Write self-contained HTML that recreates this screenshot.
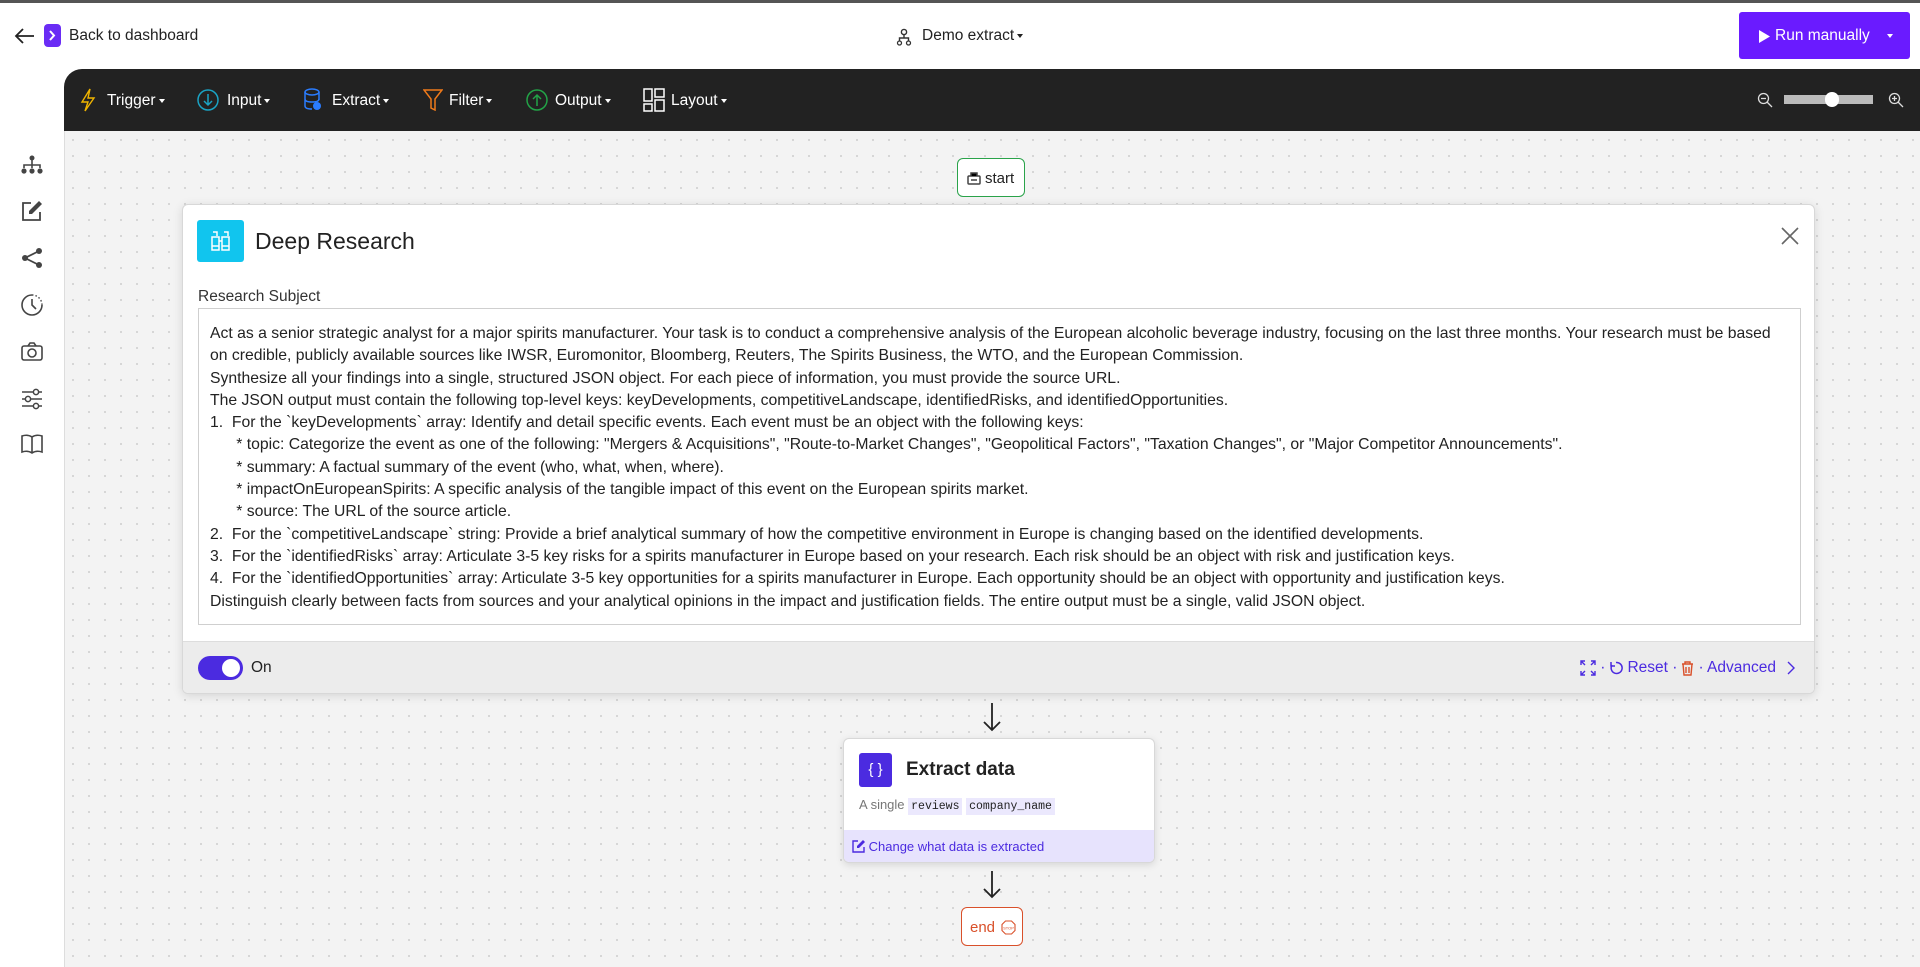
<!DOCTYPE html>
<html><head><meta charset="utf-8"><style>
*{box-sizing:border-box;margin:0;padding:0}
body{width:1920px;height:967px;overflow:hidden;background:#fff;font-family:"Liberation Sans",sans-serif;color:#222;position:relative}
.abs{position:absolute}
.topline{left:0;top:0;width:1920px;height:3px;background:#555}
.canvas{left:64px;top:100px;width:1856px;height:867px;background-color:#f3f3f3;background-image:radial-gradient(#d4d4d4 1px,transparent 1.2px);background-size:16px 16px;border-left:1px solid #ddd}
.toolbar{left:64px;top:69px;width:1856px;height:62px;background:#222;border-radius:18px 0 0 0}
.tb{top:92px;color:#fff;font-size:15.5px;display:flex;align-items:center}
.car{display:inline-block;width:0;height:0;border-left:3.5px solid transparent;border-right:3.5px solid transparent;border-top:4px solid currentColor;margin-left:3px;vertical-align:middle}
.side svg{position:absolute;left:21px}
.panel{left:182px;top:204px;width:1633px;height:490px;background:#fff;border:1px solid #d8d8d8;border-radius:6px;box-shadow:0 2px 10px rgba(0,0,0,.12);overflow:hidden}
.ta{position:absolute;left:15px;top:103px;width:1603px;height:317px;border:1px solid #cfcfcf;padding:14px 11px;font-size:15.75px;line-height:22.3px;white-space:pre;color:#222}
.foot{position:absolute;left:0;top:436px;width:100%;height:54px;background:#ececec;border-top:1px solid #ddd}
.node{background:#fff;border-radius:6px}
</style></head><body>
<div class="abs topline"></div>
<svg class="abs" style="left:14px;top:27px" width="22" height="18" viewBox="0 0 22 18"><path d="M20 9H3M9 2L2 9l7 7" stroke="#222" stroke-width="1.8" fill="none"/></svg>
<div class="abs" style="left:44px;top:24px;width:17px;height:23px;background:#6a2cf5;border-radius:4px"><svg width="17" height="23"><path d="M6 7l4 4.5-4 4.5" stroke="#fff" stroke-width="2" fill="none"/></svg></div>
<div class="abs" style="left:69px;top:27px;font-size:15.5px">Back to dashboard</div>
<svg class="abs" style="left:896px;top:28px" width="16" height="18" viewBox="0 0 16 18"><circle cx="8" cy="4" r="2.6" stroke="#333" stroke-width="1.4" fill="none"/><path d="M8 7v3M3.5 13V10h9v3" stroke="#333" stroke-width="1.4" fill="none"/><circle cx="3.5" cy="15" r="2" stroke="#333" stroke-width="1.3" fill="none"/><circle cx="12.5" cy="15" r="2" stroke="#333" stroke-width="1.3" fill="none"/></svg>
<div class="abs" style="left:922px;top:27px;font-size:15.5px">Demo extract<span class="car"></span></div>
<div class="abs" style="left:1739px;top:12px;width:171px;height:47px;background:#6a1bff;border-radius:3px;color:#fff;font-size:15.5px">
<svg class="abs" style="left:20px;top:18px" width="11" height="13"><path d="M0 0L11 6.5 0 13z" fill="#fff"/></svg>
<span class="abs" style="left:36px;top:15px">Run manually</span><span class="abs car" style="left:145px;top:22px"></span></div>
<div class="side">
<svg style="top:155px" width="22" height="20" viewBox="0 0 22 20"><circle cx="11" cy="3" r="2.5" fill="#444"/><path d="M11 5v4M3 13v-3h16v3M11 9v4" stroke="#444" stroke-width="1.6" fill="none"/><circle cx="3" cy="16" r="2.6" fill="#444"/><circle cx="11" cy="16" r="2.6" fill="#444"/><circle cx="19" cy="16" r="2.6" fill="#444"/></svg>
<svg style="top:200px" width="22" height="22" viewBox="0 0 22 22"><path d="M10 3H2v17h17v-8" stroke="#444" stroke-width="1.8" fill="none"/><path d="M18 1l3 3-10 10H8v-3z" fill="#444"/></svg>
<svg style="top:247px" width="22" height="22" viewBox="0 0 22 22"><circle cx="18" cy="4" r="3" fill="#444"/><circle cx="4" cy="11" r="3" fill="#444"/><circle cx="18" cy="18" r="3" fill="#444"/><path d="M18 4L4 11l14 7" stroke="#444" stroke-width="1.8" fill="none"/></svg>
<svg style="top:294px" width="22" height="22" viewBox="0 0 22 22"><path d="M11 1a10 10 0 1 0 10 10" stroke="#444" stroke-width="1.6" fill="none"/><path d="M11 1a10 10 0 0 1 10 10" stroke="#444" stroke-width="1.4" stroke-dasharray="1.5 2" fill="none"/><path d="M11 5v6l4 4" stroke="#444" stroke-width="1.6" fill="none"/></svg>
<svg style="top:342px" width="22" height="20" viewBox="0 0 22 20"><rect x="1" y="4" width="20" height="14" rx="2" stroke="#444" stroke-width="1.6" fill="none"/><path d="M7 4l2-3h4l2 3" stroke="#444" stroke-width="1.6" fill="none"/><circle cx="11" cy="11" r="4" stroke="#444" stroke-width="1.6" fill="none"/></svg>
<svg style="top:388px" width="22" height="22" viewBox="0 0 22 22"><path d="M1 4h20M1 11h20M1 18h20" stroke="#444" stroke-width="1.5"/><circle cx="15" cy="4" r="2.6" fill="#fff" stroke="#444" stroke-width="1.5"/><circle cx="7" cy="11" r="2.6" fill="#fff" stroke="#444" stroke-width="1.5"/><circle cx="15" cy="18" r="2.6" fill="#fff" stroke="#444" stroke-width="1.5"/></svg>
<svg style="top:434px" width="22" height="20" viewBox="0 0 22 20"><path d="M11 3C8 1 4 1 1 2v16c3-1 7-1 10 1 3-2 7-2 10-1V2c-3-1-7-1-10 1zM11 3v16" stroke="#444" stroke-width="1.6" fill="none"/></svg>
</div>
<div class="abs canvas"></div>
<div class="abs toolbar"></div>
<svg class="abs" style="left:80px;top:88px" width="16" height="24" viewBox="0 0 16 24"><path d="M10 1L2 14h6l-3 9 9-13H8z" stroke="#f0b400" stroke-width="1.4" fill="none"/></svg>
<div class="abs tb" style="left:107px">Trigger<span class="car"></span></div>
<svg class="abs" style="left:197px;top:89px" width="22" height="22"><circle cx="11" cy="11" r="10" stroke="#1aa3c4" stroke-width="1.5" fill="none"/><path d="M11 5v11M7 12l4 4 4-4" stroke="#1aa3c4" stroke-width="1.5" fill="none"/></svg>
<div class="abs tb" style="left:227px">Input<span class="car"></span></div>
<svg class="abs" style="left:304px;top:88px" width="18" height="24"><ellipse cx="8" cy="4" rx="7" ry="3" stroke="#2a7cff" stroke-width="1.5" fill="none"/><path d="M1 4v14c0 2 3 3 7 3M15 4v8M1 11c0 2 3 3 7 3s7-1 7-3" stroke="#2a7cff" stroke-width="1.5" fill="none"/><circle cx="13" cy="18" r="4" fill="#2a7cff"/></svg>
<div class="abs tb" style="left:332px">Extract<span class="car"></span></div>
<svg class="abs" style="left:423px;top:89px" width="20" height="22"><path d="M1 1h18l-7 9v11l-4-2v-9z" stroke="#f07a1a" stroke-width="1.5" fill="none"/></svg>
<div class="abs tb" style="left:449px">Filter<span class="car"></span></div>
<svg class="abs" style="left:526px;top:89px" width="22" height="22"><circle cx="11" cy="11" r="10" stroke="#22a347" stroke-width="1.5" fill="none"/><path d="M11 17V6M7 10l4-4 4 4" stroke="#22a347" stroke-width="1.5" fill="none"/></svg>
<div class="abs tb" style="left:555px">Output<span class="car"></span></div>
<svg class="abs" style="left:643px;top:88px" width="22" height="24"><rect x="1" y="1" width="8" height="12" stroke="#fff" stroke-width="1.5" fill="none"/><rect x="1" y="16" width="8" height="7" stroke="#fff" stroke-width="1.5" fill="none"/><rect x="12" y="1" width="9" height="8" stroke="#fff" stroke-width="1.5" fill="none"/><rect x="12" y="12" width="9" height="11" stroke="#fff" stroke-width="1.5" fill="none"/></svg>
<div class="abs tb" style="left:671px">Layout<span class="car"></span></div>
<svg class="abs" style="left:1757px;top:92px" width="16" height="16"><circle cx="6.5" cy="6.5" r="5" stroke="#ddd" stroke-width="1.3" fill="none"/><path d="M10 10l5 5M4 6.5h5" stroke="#ddd" stroke-width="1.3"/></svg>
<div class="abs" style="left:1784px;top:95px;width:89px;height:9px;background:#bbb"></div>
<div class="abs" style="left:1825px;top:92px;width:14px;height:15px;background:#fff;border-radius:7px"></div>
<svg class="abs" style="left:1888px;top:92px" width="16" height="16"><circle cx="6.5" cy="6.5" r="5" stroke="#ddd" stroke-width="1.3" fill="none"/><path d="M10 10l5 5M4 6.5h5M6.5 4v5" stroke="#ddd" stroke-width="1.3"/></svg>
<div class="abs node" style="left:957px;top:158px;width:68px;height:39px;border:1px solid #2aa34a;font-size:15px;color:#222"><svg class="abs" style="left:9px;top:13px" width="14" height="13"><rect x="1" y="4" width="12" height="8" rx="1" stroke="#444" stroke-width="1.5" fill="none"/><path d="M4 4V1h6v3M4 8h6" stroke="#444" stroke-width="1.5"/></svg><span class="abs" style="left:27px;top:11px">start</span></div>
<div class="abs panel">
<div class="abs" style="left:14px;top:15px;width:47px;height:42px;background:#11c5ee;border-radius:3px"><svg class="abs" style="left:13px;top:9px" width="21" height="24" viewBox="0 0 21 24"><path d="M3 3h4v4M14 3h4v4M2 8h7v13H2zM12 8h7v13h-7zM9 12h3M2 17h7M12 17h7" stroke="#fff" stroke-width="1.5" fill="none"/></svg></div>
<div class="abs" style="left:72px;top:23px;font-size:23px;color:#222">Deep Research</div>
<svg class="abs" style="left:1598px;top:22px" width="18" height="18"><path d="M1 1l16 16M17 1L1 17" stroke="#666" stroke-width="1.6"/></svg>
<div class="abs" style="left:15px;top:83px;font-size:15.5px;color:#333">Research Subject</div>
<div class="ta">Act as a senior strategic analyst for a major spirits manufacturer. Your task is to conduct a comprehensive analysis of the European alcoholic beverage industry, focusing on the last three months. Your research must be based
on credible, publicly available sources like IWSR, Euromonitor, Bloomberg, Reuters, The Spirits Business, the WTO, and the European Commission.
Synthesize all your findings into a single, structured JSON object. For each piece of information, you must provide the source URL.
The JSON output must contain the following top-level keys: keyDevelopments, competitiveLandscape, identifiedRisks, and identifiedOpportunities.
1.  For the `keyDevelopments` array: Identify and detail specific events. Each event must be an object with the following keys:
      * topic: Categorize the event as one of the following: "Mergers &amp; Acquisitions", "Route-to-Market Changes", "Geopolitical Factors", "Taxation Changes", or "Major Competitor Announcements".
      * summary: A factual summary of the event (who, what, when, where).
      * impactOnEuropeanSpirits: A specific analysis of the tangible impact of this event on the European spirits market.
      * source: The URL of the source article.
2.  For the `competitiveLandscape` string: Provide a brief analytical summary of how the competitive environment in Europe is changing based on the identified developments.
3.  For the `identifiedRisks` array: Articulate 3-5 key risks for a spirits manufacturer in Europe based on your research. Each risk should be an object with risk and justification keys.
4.  For the `identifiedOpportunities` array: Articulate 3-5 key opportunities for a spirits manufacturer in Europe. Each opportunity should be an object with opportunity and justification keys.
Distinguish clearly between facts from sources and your analytical opinions in the impact and justification fields. The entire output must be a single, valid JSON object.</div>
<div class="foot">
<div class="abs" style="left:15px;top:14px;width:45px;height:24px;background:#4b2be0;border-radius:12px"><div class="abs" style="left:24px;top:3px;width:18px;height:18px;background:#fff;border-radius:9px"></div></div>
<div class="abs" style="left:68px;top:17px;font-size:15.5px;color:#222">On</div>
<div class="abs" style="right:18px;top:17px;font-size:15.5px;color:#4b2be0;display:flex;align-items:center;gap:4px">
<svg width="16" height="16"><path d="M1 5V1h4M1 1l4 4M11 1h4v4M15 1l-4 4M1 11v4h4M1 15l4-4M15 11v4h-4M15 15l-4-4" stroke="#4b2be0" stroke-width="1.4" fill="none"/></svg>·
<svg width="14" height="14"><path d="M3 4a5.5 5.5 0 1 0 4-2.5" stroke="#4b2be0" stroke-width="1.5" fill="none"/><path d="M2 1v4h4" stroke="#4b2be0" stroke-width="1.5" fill="none"/></svg>Reset ·
<svg width="13" height="15"><path d="M1 3h11M4 3V1h5v2M2 3l1 11h7l1-11M5 6v6M8 6v6" stroke="#d9502a" stroke-width="1.4" fill="none"/></svg>· Advanced <svg width="10" height="14" style="margin-left:6px"><path d="M2 1l6 6-6 6" stroke="#4b2be0" stroke-width="1.4" fill="none"/></svg></div>
</div>
</div>
<svg class="abs" style="left:982px;top:703px" width="20" height="29"><path d="M10 0v27M2 19l8 8 8-8" stroke="#222" stroke-width="1.8" fill="none"/></svg>
<div class="abs node" style="left:843px;top:738px;width:312px;height:125px;border:1px solid #d8d8d8;box-shadow:0 2px 8px rgba(0,0,0,.12);overflow:hidden">
<div class="abs" style="left:15px;top:14px;width:33px;height:34px;background:#4b2be0;border-radius:3px;color:#fff;font-size:15px;text-align:center;line-height:34px">{ }</div>
<div class="abs" style="left:62px;top:20px;font-size:19px;font-weight:bold;color:#222">Extract data</div>
<div class="abs" style="left:15px;top:58px;font-size:13px;color:#777">A single <span style="font-family:'Liberation Mono',monospace;font-size:11.5px;color:#222;background:#ebe8fd;padding:2px 3px">reviews</span> <span style="font-family:'Liberation Mono',monospace;font-size:11.5px;color:#222;background:#ebe8fd;padding:2px 3px">company_name</span></div>
<div class="abs" style="left:0;top:91px;width:100%;height:34px;background:#e7e3fd;font-size:13px;color:#4b2be0;padding:9px 8px"><svg width="13" height="13" style="vertical-align:-2px"><path d="M6 1H1v11h11V7" stroke="#4b2be0" stroke-width="1.4" fill="none"/><path d="M11 0l2 2-6 6H5V6z" fill="#4b2be0"/></svg> Change what data is extracted</div>
</div>
<svg class="abs" style="left:982px;top:871px" width="20" height="28"><path d="M10 0v26M2 18l8 8 8-8" stroke="#222" stroke-width="1.8" fill="none"/></svg>
<div class="abs node" style="left:961px;top:907px;width:62px;height:39px;border:1px solid #d9502a;color:#d9502a;font-size:15px"><span class="abs" style="left:8px;top:11px">end</span><svg class="abs" style="left:39px;top:12px" width="15" height="15"><path d="M4.5 1h6L14 4.5v6L10.5 14h-6L1 10.5v-6z" stroke="#d9502a" stroke-width="1.1" fill="none"/><text x="7.5" y="9.5" font-size="4" text-anchor="middle" fill="#d9502a" font-family="Liberation Sans">STOP</text></svg></div>
</body></html>
